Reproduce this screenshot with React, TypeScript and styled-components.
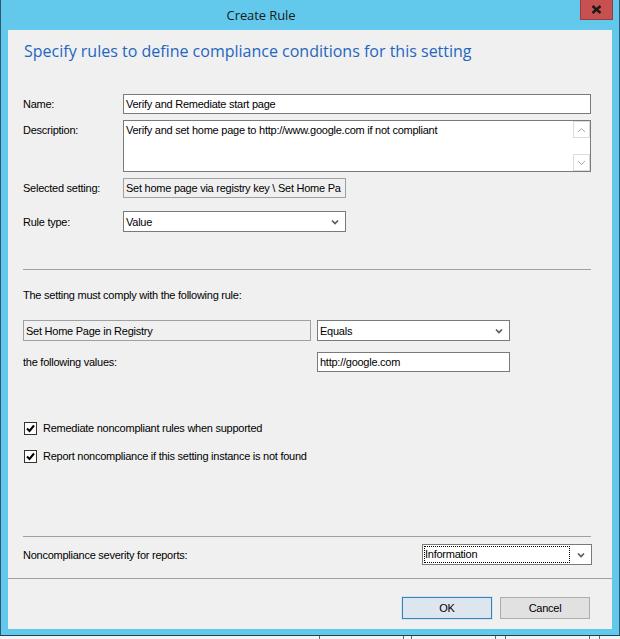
import styled, { createGlobalStyle } from "styled-components";

const GlobalStyle = createGlobalStyle`
  html, body {
    margin: 0;
    padding: 0;
    background: #f2f2f2;
  }
  body {
    font-family: "Liberation Sans", Arial, sans-serif;
    font-size: 11px;
    letter-spacing: -0.25px;
    color: #000;
  }
`;

const Screen = styled.div`
  width: 620px;
  height: 639px;
  overflow: hidden;
  display: flex;
  flex-direction: column;
`;

const Window = styled.div`
  width: 620px;
  height: 636px;
  box-sizing: border-box;
  background: #62c9ec;
  border-left: 1px solid #2c5b73;
  border-right: 1px solid #2c5b73;
  border-bottom: 1px solid #23404f;
  padding: 0 7px 6px 7px;
  display: flex;
  flex-direction: column;
`;

const TitleBar = styled.div`
  height: 30px;
  display: flex;
  align-items: flex-start;
  flex-shrink: 0;
`;

const Caption = styled.div`
  flex: 1;
  text-align: center;
  padding: 6px 66px 0 0;
  font-family: "Open Sans", "Noto Sans", sans-serif;
  font-size: 13px;
  letter-spacing: -0.1px;
  line-height: 18px;
  color: #1a1a1a;
`;

const CloseButton = styled.div`
  width: 33px;
  height: 20px;
  margin-right: -1px;
  box-sizing: border-box;
  background: #c75050;
  border: 1px solid #9c3a3a;
  border-top: none;
  display: flex;
  align-items: center;
  justify-content: center;
`;

const Panel = styled.div`
  flex: 1;
  background: #f0f0f0;
  display: flex;
  flex-direction: column;
`;

const Heading = styled.h1`
  margin: 10px 0 0 16px;
  font-family: "Open Sans", "Noto Sans", sans-serif;
  font-weight: 400;
  font-size: 16px;
  letter-spacing: 0;
  line-height: 22px;
  color: #1f66c1;
`;

const Section = styled.div`
  padding: 0 21px 0 15px;
  display: flex;
  flex-direction: column;
`;

const FieldRow = styled.div<{ $mt: number; $top?: boolean }>`
  margin-top: ${({ $mt }) => $mt}px;
  display: flex;
  align-items: ${({ $top }) => ($top ? "flex-start" : "center")};
`;

const Label = styled.div<{ $pt?: number }>`
  width: 100px;
  flex-shrink: 0;
  line-height: 14px;
  padding-top: ${({ $pt }) => $pt ?? 0}px;
`;

const Box = styled.div<{ $w?: number; $h: number; $readOnly?: boolean }>`
  ${({ $w }) => ($w ? `width: ${$w}px;` : "flex: 1;")}
  height: ${({ $h }) => $h}px;
  box-sizing: border-box;
  border: 1px solid ${({ $readOnly }) => ($readOnly ? "#a0a0a0" : "#7a7a7a")};
  background: ${({ $readOnly }) => ($readOnly ? "#f0f0f0" : "#fff")};
  padding: 0 2px;
  display: flex;
  align-items: center;
  white-space: nowrap;
  overflow: hidden;
`;

const MemoBox = styled.div`
  flex: 1;
  height: 52px;
  box-sizing: border-box;
  border: 1px solid #7a7a7a;
  background: #fff;
  display: flex;
`;

const MemoText = styled.div`
  flex: 1;
  padding: 2px 2px;
  line-height: 14px;
`;

const ScrollBar = styled.div`
  width: 17px;
  display: flex;
  flex-direction: column;
  justify-content: space-between;
  background: #fff;
`;

const ScrollArrow = styled.div`
  height: 17px;
  box-sizing: border-box;
  border: 1px solid #dcdcdc;
  display: flex;
  align-items: center;
  justify-content: center;
`;

const SelectBox = styled(Box)`
  justify-content: space-between;
  padding: 0 6px 0 2px;
`;

const FocusText = styled.span`
  flex: 1;
  outline: 1px dotted #000;
  line-height: 15px;
  margin-right: 8px;
`;

const Divider = styled.div<{ $mt: number }>`
  margin-top: ${({ $mt }) => $mt}px;
  height: 1px;
  background: #a0a0a0;
`;

const Text = styled.div<{ $mt: number }>`
  margin-top: ${({ $mt }) => $mt}px;
  line-height: 14px;
`;

const RuleGrid = styled.div`
  margin-top: 18px;
  display: grid;
  grid-template-columns: 288px 193px;
  column-gap: 6px;
  row-gap: 11px;
  align-items: center;
`;

const CheckRow = styled.label<{ $mt: number }>`
  margin-top: ${({ $mt }) => $mt}px;
  height: 16px;
  display: flex;
  align-items: center;
  gap: 6px;
  padding-left: 1px;
`;

const CheckBox = styled.span`
  width: 13px;
  height: 13px;
  box-sizing: border-box;
  border: 1px solid #333;
  background: #fff;
  display: flex;
  align-items: center;
  justify-content: center;
`;

const SeverityRow = styled.div`
  margin-top: 7px;
  display: flex;
  align-items: center;
  justify-content: space-between;
  margin-right: -1px;
`;

const Footer = styled.div`
  margin-top: 18px;
  padding-right: 22px;
  display: flex;
  justify-content: flex-end;
  gap: 8px;
`;

const Button = styled.button<{ $default?: boolean }>`
  width: 90px;
  height: 22px;
  box-sizing: border-box;
  font-family: "Liberation Sans", Arial, sans-serif;
  font-size: 11px;
  letter-spacing: -0.25px;
  color: #000;
  padding: 0;
  background: ${({ $default }) => ($default ? "#dde6ee" : "#e1e1e1")};
  border: 1px solid ${({ $default }) => ($default ? "#3c7fb1" : "#adadad")};
  box-shadow: ${({ $default }) => ($default ? "0 0 0 1px #cfe6f6" : "none")};
`;

const Backdrop = styled.div`
  flex: 1;
  background: #f4f4f4;
  display: flex;
`;

const BackdropCell = styled.div<{ $w: number }>`
  width: ${({ $w }) => $w}px;
  border-right: 1px solid #6b6b6b;
`;

function Chevron() {
  return (
    <svg width="8" height="6" viewBox="0 0 8 6">
      <polyline points="1,1.5 4,4.5 7,1.5" fill="none" stroke="#5a5a5a" strokeWidth="1.7" />
    </svg>
  );
}

function ThinChevron({ up }: { up?: boolean }) {
  return (
    <svg width="9" height="6" viewBox="0 0 9 6">
      <polyline
        points={up ? "1,5 4.5,1.5 8,5" : "1,1 4.5,4.5 8,1"}
        fill="none"
        stroke="#a6a6a6"
        strokeWidth="1"
      />
    </svg>
  );
}

function Check() {
  return (
    <svg width="9" height="9" viewBox="0 0 9 9">
      <polyline points="1,4.5 3.5,7 8,1.5" fill="none" stroke="#000" strokeWidth="2" />
    </svg>
  );
}

export default function App() {
  return (
    <>
      <GlobalStyle />
      <Screen>
        <Window>
          <TitleBar>
            <Caption>Create Rule</Caption>
            <CloseButton>
              <svg width="11" height="9" viewBox="0 0 11 9">
                <path d="M1.5 1 L9.5 8 M9.5 1 L1.5 8" stroke="#1a1a1a" strokeWidth="2.4" />
              </svg>
            </CloseButton>
          </TitleBar>
          <Panel>
            <Heading>Specify rules to define compliance conditions for this setting</Heading>
            <Section>
              <FieldRow $mt={32}>
                <Label>Name:</Label>
                <Box $h={20}>Verify and Remediate start page</Box>
              </FieldRow>
              <FieldRow $mt={6} $top>
                <Label $pt={3}>Description:</Label>
                <MemoBox>
                  <MemoText>Verify and set home page to http://www.google.com if not compliant</MemoText>
                  <ScrollBar>
                    <ScrollArrow>
                      <ThinChevron up />
                    </ScrollArrow>
                    <ScrollArrow>
                      <ThinChevron />
                    </ScrollArrow>
                  </ScrollBar>
                </MemoBox>
              </FieldRow>
              <FieldRow $mt={6}>
                <Label>Selected setting:</Label>
                <Box $w={223} $h={20} $readOnly>
                  Set home page via registry key \ Set Home Pa
                </Box>
              </FieldRow>
              <FieldRow $mt={13}>
                <Label>Rule type:</Label>
                <SelectBox $w={223} $h={21}>
                  <span>Value</span>
                  <Chevron />
                </SelectBox>
              </FieldRow>
              <Divider $mt={37} />
              <Text $mt={18}>The setting must comply with the following rule:</Text>
              <RuleGrid>
                <Box $h={21} $readOnly>
                  Set Home Page in Registry
                </Box>
                <SelectBox $h={21}>
                  <span>Equals</span>
                  <Chevron />
                </SelectBox>
                <span>the following values:</span>
                <Box $h={20}>http://google.com</Box>
              </RuleGrid>
              <CheckRow $mt={48}>
                <CheckBox>
                  <Check />
                </CheckBox>
                Remediate noncompliant rules when supported
              </CheckRow>
              <CheckRow $mt={12}>
                <CheckBox>
                  <Check />
                </CheckBox>
                Report noncompliance if this setting instance is not found
              </CheckRow>
              <Divider $mt={72} />
              <SeverityRow>
                <span>Noncompliance severity for reports:</span>
                <SelectBox $w={170} $h={21}>
                  <FocusText>Information</FocusText>
                  <Chevron />
                </SelectBox>
              </SeverityRow>
            </Section>
            <Divider $mt={13} />
            <Footer>
              <Button $default>OK</Button>
              <Button>Cancel</Button>
            </Footer>
          </Panel>
        </Window>
        <Backdrop>
          <BackdropCell $w={319} />
          <BackdropCell $w={83} />
          <BackdropCell $w={7} />
          <BackdropCell $w={83} />
          <BackdropCell $w={9} />
          <BackdropCell $w={83} />
          <BackdropCell $w={9} />
        </Backdrop>
      </Screen>
    </>
  );
}
